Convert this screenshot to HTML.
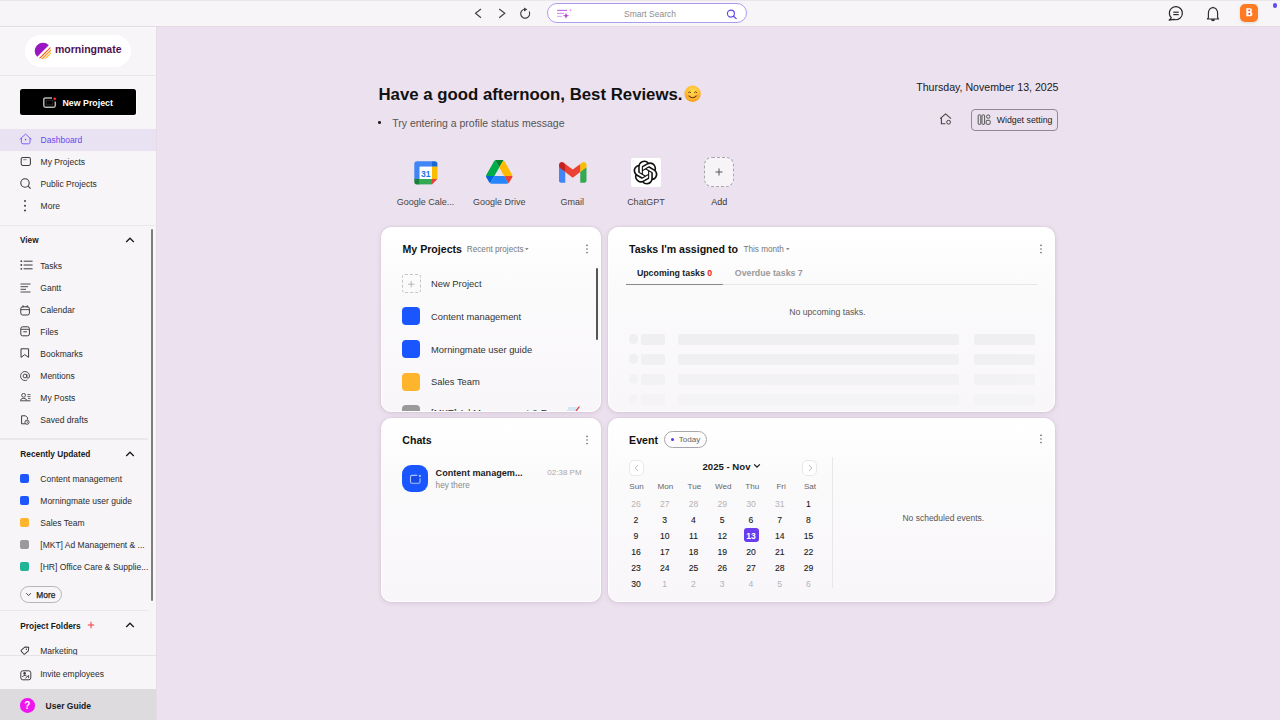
<!DOCTYPE html><html><head><meta charset="utf-8"><style>
html,body{margin:0;padding:0;width:1280px;height:720px;overflow:hidden;background:#ece1ee;font-family:"Liberation Sans",sans-serif;}
.a{position:absolute;}
.t{position:absolute;line-height:1;white-space:nowrap;}
</style></head><body>
<div class="a" style="left:0px;top:0px;width:1280px;height:720px;background:#ece1ee"></div>
<div class="a" style="left:0px;top:0px;width:1280px;height:27px;background:#f7f5f8;border-bottom:1px solid #e2dbe3;box-sizing:border-box;border-top:1px solid #ebe6ec"></div>
<svg class="a" style="left:470px;top:4px;" width="70" height="20" viewBox="0 0 70 20">
<polyline points="11,5 5.5,9.3 11,13.8" fill="none" stroke="#404040" stroke-width="1.15"/>
<polyline points="29.2,5 34.8,9.3 29.2,13.8" fill="none" stroke="#404040" stroke-width="1.15"/>
<path d="M59.2,7.6 A4.5,4.5 0 1 1 54.6,5.2" fill="none" stroke="#404040" stroke-width="1.15"/>
<path d="M54.0,3.6 L57.4,5.6 L54.0,7.6 Z" fill="#404040"/>
</svg>
<div class="a" style="left:546.5px;top:3.3px;width:200px;height:20.2px;box-sizing:border-box;border:1.2px solid #ac9cf0;border-radius:11px;background:#fff"></div>
<svg class="a" style="left:555px;top:8px;" width="20" height="11" viewBox="0 0 20 11">
<rect x="2" y="1.8" width="10" height="1.2" fill="#c86ee8"/>
<rect x="2" y="4.8" width="7" height="1.2" fill="#d89af0"/>
<rect x="2" y="7.8" width="5" height="1.2" fill="#e0b0f0"/>
<path d="M11,4.5 L11.8,6.9 L14.2,7.7 L11.8,8.5 L11,10.9 L10.2,8.5 L7.8,7.7 L10.2,6.9 Z" fill="#b040d8"/>
<path d="M15.5,0.5 L15.9,1.8 L17.2,2.2 L15.9,2.6 L15.5,3.9 L15.1,2.6 L13.8,2.2 L15.1,1.8 Z" fill="#d890f0"/>
</svg>
<div class="t" style="left:550px;width:200px;text-align:center;top:9.90px;font-size:8.5px;font-weight:400;color:#8e8e8e;">Smart Search</div>
<svg class="a" style="left:726px;top:8.5px;" width="12" height="11" viewBox="0 0 12 11"><circle cx="4.9" cy="4.6" r="3.5" fill="none" stroke="#5b45ef" stroke-width="1.1"/><line x1="7.5" y1="7.2" x2="10.2" y2="9.6" stroke="#5b45ef" stroke-width="1.2" stroke-linecap="round"/></svg>
<svg class="a" style="left:1166px;top:5px;" width="20" height="17" viewBox="0 0 20 17"><path d="M5.4,12.9 A6.5,6.5 0 1 1 8.0,14.4 L3.1,15.1 Z" fill="none" stroke="#2a2a2a" stroke-width="1.15" stroke-linejoin="round"/>
<line x1="7.3" y1="7.2" x2="12.7" y2="7.2" stroke="#2a2a2a" stroke-width="1.2"/><line x1="7.3" y1="9.6" x2="12.7" y2="9.6" stroke="#2a2a2a" stroke-width="1.2"/></svg>
<svg class="a" style="left:1204px;top:5px;" width="18" height="17" viewBox="0 0 18 17"><path d="M4.4,12.6 L4.4,8.0 A4.6,5.4 0 0 1 13.6,8.0 L13.6,12.6 L14.6,14.0 L3.4,14.0 Z" fill="none" stroke="#2a2a2a" stroke-width="1.15" stroke-linejoin="round"/>
<path d="M7.0,14.2 A2,2 0 0 0 11.0,14.2 Z" fill="#2a2a2a"/><path d="M8.2,2.6 L9,1.6 L9.8,2.6 Z" fill="#2a2a2a"/></svg>
<div class="a" style="left:1240px;top:4.2px;width:18.2px;height:18.2px;background:#ff7a22;border-radius:5px;box-shadow:0 1px 3px rgba(0,0,0,0.12)"></div>
<svg class="a" style="left:1245.8px;top:8.4px;" width="7" height="9" viewBox="0 0 7 9"><path d="M0.3,0.3 L3.9,0.3 Q6,0.3 6,2.2 Q6,3.4 5.1,3.95 Q6.5,4.5 6.5,6.2 Q6.5,8.3 4.1,8.3 L0.3,8.3 Z" fill="#fff"/><ellipse cx="3.3" cy="2.4" rx="0.95" ry="0.8" fill="#ff2a10"/><ellipse cx="3.4" cy="5.9" rx="1" ry="0.85" fill="#ff2a10"/></svg>
<div class="a" style="left:1272.5px;top:3px;width:4.6px;height:4.6px;background:#5d4cf0;border-radius:50%"></div>
<div class="a" style="left:0px;top:27px;width:156px;height:693px;background:#f7f5f8"></div>
<div class="a" style="left:156px;top:27px;width:1px;height:693px;background:#e6dce7"></div>
<div class="a" style="left:0px;top:27px;width:156px;height:1px;background:#fbfafc"></div>
<div class="a" style="left:25px;top:35px;width:106px;height:32px;background:#fff;border-radius:16px"></div>
<svg class="a" style="left:33px;top:42px;" width="22" height="18" viewBox="0 0 22 18"><defs><clipPath id="lc"><circle cx="10" cy="9" r="8.3"/></clipPath></defs>
<g clip-path="url(#lc)"><path d="M0,0 L19,0 L1,18 L0,18 Z" fill="#9a18c0"/>
<line x1="20" y1="3" x2="5" y2="18" stroke="#ff5a1e" stroke-width="1.2"/>
<line x1="21" y1="5" x2="7" y2="19" stroke="#ff8a1e" stroke-width="1.2"/>
<line x1="22" y1="7" x2="10" y2="19" stroke="#ffb81e" stroke-width="1.2"/></g></svg>
<div class="t " style="left:55px;top:44.11px;font-size:10.5px;font-weight:700;color:#4d1154;letter-spacing:0px">morningmate</div>
<div class="a" style="left:0px;top:74.5px;width:156px;height:1.5px;background:#ebe7ec"></div>
<div class="a" style="left:19.5px;top:88.5px;width:117px;height:27px;background:#fff;border-radius:3px"></div>
<div class="a" style="left:20px;top:89px;width:116px;height:26px;background:#000;border-radius:2.5px"></div>
<svg class="a" style="left:42px;top:96px;" width="16" height="13" viewBox="0 0 16 13"><path d="M10,1.9 L3.5,1.9 Q1.8,1.9 1.8,3.6 L1.8,9.6 Q1.8,11.3 3.5,11.3 L11.6,11.3 Q13.3,11.3 13.3,9.6 L13.3,5.4" fill="none" stroke="#b4b4b4" stroke-width="1.5"/>
<rect x="4.2" y="4.3" width="6.6" height="4.6" fill="none" stroke="#2e2e2e" stroke-width="0.8"/>
<circle cx="12.7" cy="2.8" r="1.35" fill="#ff2a2a"/></svg>
<div class="t " style="left:62.5px;top:98.85px;font-size:8.8px;font-weight:700;color:#fff;">New Project</div>
<div class="a" style="left:0px;top:129px;width:156px;height:22px;background:#e8e2f3"></div>
<svg class="a" style="left:19px;top:132px;" width="14" height="13" viewBox="0 0 14 13"><polyline points="1,7.2 6.6,2.1 12.2,7.2" fill="none" stroke="#7a5cf5" stroke-width="0.95" stroke-linejoin="round" stroke-linecap="round"/><path d="M2.4,5.9 L2.4,10.3 Q2.4,11.8 3.9,11.8 L9.5,11.8 Q11,11.8 11,10.3 L11,5.9" fill="none" stroke="#7a5cf5" stroke-width="0.95"/><circle cx="6.6" cy="7.6" r="0.8" fill="#6a48f0"/></svg>
<div class="t " style="left:40.6px;top:135.90px;font-size:8.5px;font-weight:400;color:#6a48f0;">Dashboard</div>
<svg class="a" style="left:19px;top:155px;" width="14" height="13" viewBox="0 0 14 13"><rect x="2.2" y="2.4" width="9.2" height="8" rx="1.6" fill="none" stroke="#3c3c3c" stroke-width="1.05"/><line x1="4.2" y1="4.7" x2="7.6" y2="4.7" stroke="#777" stroke-width="0.9"/></svg>
<div class="t " style="left:40.6px;top:157.80px;font-size:8.5px;font-weight:400;color:#2b2b2b;">My Projects</div>
<svg class="a" style="left:19px;top:177px;" width="14" height="13" viewBox="0 0 14 13"><circle cx="6" cy="6" r="4.2" fill="none" stroke="#3c3c3c" stroke-width="1.1"/><line x1="9.1" y1="9.1" x2="11.6" y2="11.6" stroke="#3c3c3c" stroke-width="1.1"/></svg>
<div class="t " style="left:40.6px;top:179.80px;font-size:8.5px;font-weight:400;color:#2b2b2b;">Public Projects</div>
<svg class="a" style="left:21px;top:199px;" width="8" height="14" viewBox="0 0 8 14"><circle cx="4" cy="2" r="1" fill="#3c3c3c"/><circle cx="4" cy="6.8" r="1" fill="#3c3c3c"/><circle cx="4" cy="11.6" r="1" fill="#3c3c3c"/></svg>
<div class="t " style="left:40.6px;top:201.80px;font-size:8.5px;font-weight:400;color:#2b2b2b;">More</div>
<div class="a" style="left:0px;top:224.8px;width:156px;height:1.3px;background:#ebe7ec"></div>
<div class="t " style="left:20px;top:236.81px;font-size:8.2px;font-weight:700;color:#1a1a1a;">View</div>
<svg class="a" style="left:124px;top:236px;" width="12" height="8" viewBox="0 0 12 8"><polyline points="2.2,6 6,2.2 9.8,6" fill="none" stroke="#1a1a1a" stroke-width="1.3"/></svg>
<div class="a" style="left:151px;top:229px;width:2.2px;height:371.5px;background:#7e7e7e;border-radius:1px"></div>
<svg class="a" style="left:20px;top:260px;" width="14" height="11" viewBox="0 0 14 11"><circle cx="1.3" cy="1.2" r="0.9" fill="#3c3c3c"/><circle cx="1.3" cy="5" r="0.9" fill="#3c3c3c"/><circle cx="1.3" cy="8.8" r="0.9" fill="#3c3c3c"/><line x1="3.6" y1="1.2" x2="12.6" y2="1.2" stroke="#3c3c3c" stroke-width="1"/><line x1="3.6" y1="5" x2="12.6" y2="5" stroke="#3c3c3c" stroke-width="1"/><line x1="3.6" y1="8.8" x2="12.6" y2="8.8" stroke="#3c3c3c" stroke-width="1"/></svg>
<div class="t " style="left:40.3px;top:262.20px;font-size:8.5px;font-weight:400;color:#2b2b2b;">Tasks</div>
<svg class="a" style="left:20px;top:283px;" width="14" height="11" viewBox="0 0 14 11"><line x1="0.5" y1="1" x2="10.5" y2="1" stroke="#3c3c3c" stroke-width="0.9"/><line x1="0.5" y1="3.7" x2="8" y2="3.7" stroke="#3c3c3c" stroke-width="0.9"/><line x1="0.5" y1="6.3" x2="6" y2="6.3" stroke="#3c3c3c" stroke-width="0.9"/><line x1="0.5" y1="9" x2="10.5" y2="9" stroke="#3c3c3c" stroke-width="0.9"/></svg>
<div class="t " style="left:40.3px;top:284.20px;font-size:8.5px;font-weight:400;color:#2b2b2b;">Gantt</div>
<svg class="a" style="left:20px;top:304.5px;" width="14" height="11" viewBox="0 0 14 11"><rect x="0.8" y="1.8" width="8.6" height="8.2" rx="1.8" fill="none" stroke="#3c3c3c" stroke-width="1"/><line x1="0.8" y1="4.6" x2="9.4" y2="4.6" stroke="#3c3c3c" stroke-width="0.9"/><line x1="3" y1="0.3" x2="3" y2="2.5" stroke="#3c3c3c" stroke-width="1"/><line x1="7.2" y1="0.3" x2="7.2" y2="2.5" stroke="#3c3c3c" stroke-width="1"/></svg>
<div class="t " style="left:40.3px;top:306.20px;font-size:8.5px;font-weight:400;color:#2b2b2b;">Calendar</div>
<svg class="a" style="left:20px;top:326px;" width="14" height="11" viewBox="0 0 14 11"><rect x="0.8" y="0.8" width="8.6" height="9" rx="1.8" fill="none" stroke="#3c3c3c" stroke-width="1"/><line x1="0.8" y1="3.3" x2="9.4" y2="3.3" stroke="#3c3c3c" stroke-width="0.9"/><line x1="3.3" y1="5.8" x2="6.9" y2="5.8" stroke="#3c3c3c" stroke-width="1"/></svg>
<div class="t " style="left:40.3px;top:328.20px;font-size:8.5px;font-weight:400;color:#2b2b2b;">Files</div>
<svg class="a" style="left:20px;top:348.2px;" width="14" height="11" viewBox="0 0 14 11"><path d="M1,0.8 L8.6,0.8 L8.6,9.4 L4.8,6.6 L1,9.4 Z" fill="none" stroke="#3c3c3c" stroke-width="1" stroke-linejoin="round"/></svg>
<div class="t " style="left:40.3px;top:350.20px;font-size:8.5px;font-weight:400;color:#2b2b2b;">Bookmarks</div>
<svg class="a" style="left:20px;top:370.7px;" width="14" height="11" viewBox="0 0 14 11"><circle cx="5" cy="5" r="1.9" fill="none" stroke="#3c3c3c" stroke-width="0.9"/><path d="M6.9,3.2 L6.9,5.9 Q6.9,7.2 8.1,7.2 Q9.5,7.2 9.5,5 A4.5,4.5 0 1 0 7.3,8.9" fill="none" stroke="#3c3c3c" stroke-width="0.9"/></svg>
<div class="t " style="left:40.3px;top:372.20px;font-size:8.5px;font-weight:400;color:#2b2b2b;">Mentions</div>
<svg class="a" style="left:20px;top:393.3px;" width="14" height="11" viewBox="0 0 14 11"><circle cx="3.6" cy="2.3" r="1.9" fill="none" stroke="#3c3c3c" stroke-width="0.9"/><path d="M0.3,7.6 Q0.8,5.3 3.6,5.3 Q6.4,5.3 6.9,7.6" fill="none" stroke="#3c3c3c" stroke-width="0.9"/><line x1="0.2" y1="7.8" x2="10.5" y2="7.8" stroke="#3c3c3c" stroke-width="0.9"/><line x1="7.4" y1="1.6" x2="10.5" y2="1.6" stroke="#3c3c3c" stroke-width="0.8"/><line x1="7.4" y1="3.6" x2="10.5" y2="3.6" stroke="#3c3c3c" stroke-width="0.8"/><line x1="8" y1="5.6" x2="10.5" y2="5.6" stroke="#3c3c3c" stroke-width="0.8"/></svg>
<div class="t " style="left:40.3px;top:394.20px;font-size:8.5px;font-weight:400;color:#2b2b2b;">My Posts</div>
<svg class="a" style="left:20px;top:414.7px;" width="14" height="11" viewBox="0 0 14 11"><path d="M5.5,8.8 L1.6,8.8 L1.6,0.8 L5.6,0.8 L7.6,2.8 L7.6,4.5" fill="none" stroke="#3c3c3c" stroke-width="1" stroke-linejoin="round"/><circle cx="7" cy="7.2" r="2.1" fill="none" stroke="#3c3c3c" stroke-width="0.9"/><polyline points="7,6.2 7,7.3 7.8,7.8" fill="none" stroke="#3c3c3c" stroke-width="0.7"/></svg>
<div class="t " style="left:40.3px;top:416.20px;font-size:8.5px;font-weight:400;color:#2b2b2b;">Saved drafts</div>
<div class="a" style="left:0px;top:438.3px;width:148px;height:1.5px;background:#ebe7ec"></div>
<div class="t " style="left:20.3px;top:449.97px;font-size:8.3px;font-weight:700;color:#1a1a1a;">Recently Updated</div>
<svg class="a" style="left:124px;top:450px;" width="12" height="8" viewBox="0 0 12 8"><polyline points="2.2,6 6,2.2 9.8,6" fill="none" stroke="#1a1a1a" stroke-width="1.3"/></svg>
<div class="a" style="left:20px;top:473.9px;width:9.2px;height:9.3px;background:#1f57ff;border-radius:2px"></div>
<div class="t " style="left:40.3px;top:475.30px;font-size:8.5px;font-weight:400;color:#2b2b2b;">Content management</div>
<div class="a" style="left:20px;top:495.9px;width:9.2px;height:9.3px;background:#1f57ff;border-radius:2px"></div>
<div class="t " style="left:40.3px;top:497.30px;font-size:8.5px;font-weight:400;color:#2b2b2b;">Morningmate user guide</div>
<div class="a" style="left:20px;top:517.9px;width:9.2px;height:9.3px;background:#ffb42e;border-radius:2px"></div>
<div class="t " style="left:40.3px;top:519.30px;font-size:8.5px;font-weight:400;color:#2b2b2b;">Sales Team</div>
<div class="a" style="left:20px;top:539.9px;width:9.2px;height:9.3px;background:#9a9a9a;border-radius:2px"></div>
<div class="t " style="left:40.3px;top:541.30px;font-size:8.5px;font-weight:400;color:#2b2b2b;">[MKT] Ad Management &amp; ...</div>
<div class="a" style="left:20px;top:561.9px;width:9.2px;height:9.3px;background:#1fb496;border-radius:2px"></div>
<div class="t " style="left:40.3px;top:563.30px;font-size:8.5px;font-weight:400;color:#2b2b2b;">[HR] Office Care &amp; Supplie...</div>
<div class="a" style="left:20px;top:586.2px;width:41.6px;height:17.1px;box-sizing:border-box;border:1px solid #b8b5ba;border-radius:9px"></div>
<svg class="a" style="left:25px;top:592px;" width="8" height="5" viewBox="0 0 8 5"><polyline points="1.3,1.2 3.6,3.5 5.9,1.2" fill="none" stroke="#333" stroke-width="0.9"/></svg>
<div class="t " style="left:36.3px;top:590.79px;font-size:8.4px;font-weight:400;color:#1e1e1e;-webkit-text-stroke:0.25px #1e1e1e">More</div>
<div class="a" style="left:0px;top:609.8px;width:148px;height:1.2px;background:#ebe7ec"></div>
<div class="t " style="left:20.3px;top:621.57px;font-size:8.3px;font-weight:700;color:#1a1a1a;">Project Folders</div>
<svg class="a" style="left:86px;top:620px;" width="10" height="10" viewBox="0 0 10 10"><line x1="5" y1="1.8" x2="5" y2="8.2" stroke="#f04a4a" stroke-width="1.1"/><line x1="1.8" y1="5" x2="8.2" y2="5" stroke="#f04a4a" stroke-width="1.1"/></svg>
<svg class="a" style="left:124px;top:621px;" width="12" height="8" viewBox="0 0 12 8"><polyline points="2.2,6 6,2.2 9.8,6" fill="none" stroke="#1a1a1a" stroke-width="1.3"/></svg>
<div class="a" style="left:0;top:640px;width:156px;height:15.5px;overflow:hidden">
<svg class="a" style="left:19.5px;top:5.3px;" width="12" height="11" viewBox="0 0 12 11"><g transform="translate(5.5,5.0) rotate(-40) translate(-4.4,-3)"><path d="M1.1,0.4 L6.0,0.4 L8.6,3 L6.0,5.6 L1.1,5.6 Q0.4,5.6 0.4,4.9 L0.4,1.1 Q0.4,0.4 1.1,0.4 Z" fill="none" stroke="#3c3c3c" stroke-width="0.95" stroke-linejoin="round"/><circle cx="5.6" cy="3" r="0.65" fill="#3c3c3c"/></g></svg>
<div class="t " style="left:40.2px;top:6.80px;font-size:8.5px;font-weight:400;color:#2b2b2b;">Marketing</div>
</div>
<div class="a" style="left:0px;top:655.3px;width:156px;height:1px;background:#e6e2e7"></div>
<svg class="a" style="left:19.5px;top:669.5px;" width="12" height="11" viewBox="0 0 12 11"><rect x="0.8" y="0.8" width="10" height="9" rx="2" fill="none" stroke="#3c3c3c" stroke-width="1"/><circle cx="4.6" cy="3.4" r="1.3" fill="#3c3c3c"/><path d="M2.2,7.2 Q3.2,5.2 5.4,5.4 L6.6,6" fill="none" stroke="#3c3c3c" stroke-width="1"/><path d="M5.2,8.4 L8.6,5.4 M8.6,5.4 L8.6,8.2" fill="none" stroke="#3c3c3c" stroke-width="0.9"/></svg>
<div class="t " style="left:40.2px;top:670.10px;font-size:8.5px;font-weight:400;color:#2b2b2b;">Invite employees</div>
<div class="a" style="left:0px;top:689.3px;width:156px;height:30.7px;background:#dedbdf"></div>
<div class="a" style="left:20.1px;top:698px;width:14.6px;height:14.6px;background:#f014f0;border-radius:50%"></div>
<div class="t" style="left:-72.6px;width:200px;text-align:center;top:700.74px;font-size:10px;font-weight:700;color:#fff;">?</div>
<div class="t " style="left:45.6px;top:701.60px;font-size:8.5px;font-weight:700;color:#1a1a1a;">User Guide</div>
<div class="t " style="left:378.5px;top:86.78px;font-size:16.8px;font-weight:700;color:#111;">Have a good afternoon, Best Reviews.<svg style="display:inline-block;vertical-align:top;margin-top:-2px;margin-left:1.3px" width="18" height="18" viewBox="0 0 18 18"><defs><radialGradient id="eg" cx="50%" cy="35%" r="65%"><stop offset="0" stop-color="#ffdc50"/><stop offset="0.65" stop-color="#ffbd30"/><stop offset="1" stop-color="#f59a1a"/></radialGradient></defs><circle cx="8.6" cy="8.8" r="8.2" fill="url(#eg)"/><path d="M4.2,7.8 Q5.6,5.8 7.0,7.8" fill="none" stroke="#6b3a12" stroke-width="1"/><path d="M10.2,7.8 Q11.6,5.8 13.0,7.8" fill="none" stroke="#6b3a12" stroke-width="1"/><path d="M4.6,10.6 Q8.6,14.8 12.6,10.6" fill="none" stroke="#6b3a12" stroke-width="1.1"/><ellipse cx="3.8" cy="10.6" rx="1.6" ry="1" fill="#ff7a5a" opacity="0.45"/><ellipse cx="13.4" cy="10.6" rx="1.6" ry="1" fill="#ff7a5a" opacity="0.45"/></svg></div>
<div class="a" style="left:378.2px;top:121.3px;width:2.6px;height:2.6px;background:#222;border-radius:50%"></div>
<div class="t " style="left:392.2px;top:117.61px;font-size:10.5px;font-weight:400;color:#555;">Try entering a profile status message</div>
<div class="t" style="right:221.5px;top:82.03px;font-size:10.6px;font-weight:400;color:#1a1a1a;text-align:right;">Thursday, November 13, 2025</div>
<svg class="a" style="left:938px;top:112px;" width="16" height="14" viewBox="0 0 16 14"><path d="M2.2,6.6 L7.6,1.8 L13,6.6" fill="none" stroke="#444" stroke-width="1.1" stroke-linejoin="round"/><path d="M3.4,5.6 L3.4,11.8 L7.4,11.8" fill="none" stroke="#444" stroke-width="1.1"/><circle cx="10.6" cy="10.2" r="1.9" fill="none" stroke="#444" stroke-width="1"/></svg>
<div class="a" style="left:971.2px;top:108.5px;width:86.8px;height:22.5px;box-sizing:border-box;border:1px solid #8f8a93;border-radius:4px"></div>
<svg class="a" style="left:977px;top:113px;" width="15" height="13" viewBox="0 0 15 13"><rect x="1.2" y="1.9" width="2.6" height="9.4" rx="0.6" fill="none" stroke="#555" stroke-width="1"/><rect x="5.0" y="1.9" width="2.6" height="9.4" rx="0.6" fill="none" stroke="#555" stroke-width="1"/><circle cx="11.2" cy="3.6" r="1.7" fill="none" stroke="#555" stroke-width="1"/><rect x="9.2" y="7.3" width="4" height="4" rx="0.8" fill="none" stroke="#555" stroke-width="1"/></svg>
<div class="t " style="left:996.7px;top:115.75px;font-size:8.8px;font-weight:400;color:#222;">Widget setting</div>
<svg class="a" style="left:414px;top:161px;" width="24" height="24" viewBox="0 0 24 24">
<path d="M0.3,3 Q0.3,0.3 3,0.3 L18,0.3 L18,5.7 L5.7,5.7 L5.7,18 L0.3,18 Z" fill="#4285f4"/>
<path d="M18,0.3 L20.7,0.3 Q23.4,0.3 23.4,3 L23.4,5.7 L18,5.7 Z" fill="#1967d2"/>
<rect x="18" y="5.7" width="5.4" height="12.3" fill="#fbbc04"/>
<path d="M5.7,18 L18,18 L18,23.4 L5.7,23.4 Z" fill="#34a853"/>
<path d="M0.3,18 L5.7,18 L5.7,23.4 L3,23.4 Q0.3,23.4 0.3,20.7 Z" fill="#188038"/>
<path d="M18,18 L23.4,18 L18,23.4 Z" fill="#ea4335"/>
<rect x="5.7" y="5.7" width="12.3" height="12.3" fill="#fff"/>
<text x="11.85" y="15.6" font-family="Liberation Sans" font-size="8.6" font-weight="700" fill="#1a73e8" text-anchor="middle">31</text>
</svg>
<div class="t" style="left:325.5px;width:200px;text-align:center;top:197.78px;font-size:9px;font-weight:400;color:#444;">Google Cale...</div>
<svg class="a" style="left:486px;top:160.4px;" width="27" height="24" viewBox="0 0 27 24"><g transform="scale(0.3036)">
<path d="m6.6 66.85 3.85 6.65c.8 1.4 1.95 2.5 3.3 3.3l13.75-23.8h-27.5c0 1.55.4 3.1 1.2 4.5z" fill="#0066da"/>
<path d="m43.65 25-13.75-23.8c-1.35.8-2.5 1.9-3.3 3.3l-25.4 44a9.06 9.06 0 0 0 -1.2 4.5h27.5z" fill="#00ac47"/>
<path d="m73.55 76.8c1.35-.8 2.5-1.9 3.3-3.3l1.6-2.75 7.65-13.25c.8-1.4 1.2-2.95 1.2-4.5h-27.502l5.852 11.5z" fill="#ea4335"/>
<path d="m43.65 25 13.75-23.8c-1.35-.8-2.9-1.2-4.5-1.2h-18.5c-1.6 0-3.15.45-4.5 1.2z" fill="#00832d"/>
<path d="m59.8 53h-32.3l-13.75 23.8c1.35.8 2.9 1.2 4.5 1.2h50.8c1.6 0 3.15-.45 4.5-1.2z" fill="#2684fc"/>
<path d="m73.4 26.5-12.7-22c-.8-1.4-1.950-2.5-3.3-3.3l-13.75 23.8 16.15 28h27.45c0-1.55-.4-3.1-1.2-4.5z" fill="#ffba00"/>
</g></svg>
<div class="t" style="left:399.3px;width:200px;text-align:center;top:197.78px;font-size:9px;font-weight:400;color:#444;">Google Drive</div>
<svg class="a" style="left:559px;top:162px;" width="28" height="21" viewBox="0 0 28 21"><g transform="scale(0.1075)">
<path fill="#4285F4" d="M58.182 192.05V93.14L27.507 65.077 0 49.504v125.091c0 9.658 7.825 17.455 17.455 17.455h40.727Z"/>
<path fill="#34A853" d="M197.818 192.05h40.727c9.659 0 17.455-7.826 17.455-17.455V49.505l-31.156 17.837-27.026 25.798v98.91Z"/>
<path fill="#EA4335" d="m58.182 93.14-4.174-38.647 4.174-36.989L128 69.868l69.818-52.364 4.669 34.992-4.669 40.644L128 145.504z"/>
<path fill="#FBBC04" d="M197.818 17.504V93.14L256 49.504V26.231c0-21.585-24.64-33.89-41.89-20.945l-16.292 12.218Z"/>
<path fill="#C5221F" d="M0 49.504l26.759 20.07L58.182 93.14V17.504L41.89 5.286C24.61-7.66 0 4.646 0 26.23v23.273Z"/>
</g></svg>
<div class="t" style="left:472.29999999999995px;width:200px;text-align:center;top:197.78px;font-size:9px;font-weight:400;color:#444;">Gmail</div>
<div class="a" style="left:631.2px;top:158px;width:29.4px;height:29.4px;background:#fff;border-radius:2px"></div>
<svg class="a" style="left:633.4px;top:160.2px;" width="25" height="25" viewBox="0 0 25 25"><g transform="translate(0.5,0.5)"><path fill="#111" d="M22.2819 9.8211a5.9847 5.9847 0 0 0-.5157-4.9108 6.0462 6.0462 0 0 0-6.5098-2.9A6.0651 6.0651 0 0 0 4.9807 4.1818a5.9847 5.9847 0 0 0-3.9977 2.9 6.0462 6.0462 0 0 0 .7427 7.0966 5.98 5.98 0 0 0 .511 4.9107 6.051 6.051 0 0 0 6.5146 2.9001A5.9847 5.9847 0 0 0 13.2599 24a6.0557 6.0557 0 0 0 5.7718-4.2058 5.9894 5.9894 0 0 0 3.9977-2.9001 6.0557 6.0557 0 0 0-.7475-7.0729zm-9.022 12.6081a4.4755 4.4755 0 0 1-2.8764-1.0408l.1419-.0804 4.7783-2.7582a.7948.7948 0 0 0 .3927-.6813v-6.7369l2.02 1.1686a.071.071 0 0 1 .038.052v5.5826a4.504 4.504 0 0 1-4.4945 4.4944zm-9.6607-4.1254a4.4708 4.4708 0 0 1-.5346-3.0137l.142.0852 4.783 2.7582a.7712.7712 0 0 0 .7806 0l5.8428-3.3685v2.3324a.0804.0804 0 0 1-.0332.0615L9.74 19.9502a4.4992 4.4992 0 0 1-6.1408-1.6464zM2.3408 7.8956a4.485 4.485 0 0 1 2.3655-1.9728V11.6a.7664.7664 0 0 0 .3879.6765l5.8144 3.3543-2.0201 1.1685a.0757.0757 0 0 1-.071 0l-4.8303-2.7865A4.504 4.504 0 0 1 2.3408 7.872zm16.5963 3.8558L13.1038 8.364 15.1192 7.2a.0757.0757 0 0 1 .071 0l4.8303 2.7913a4.4944 4.4944 0 0 1-.6765 8.1042v-5.6772a.79.79 0 0 0-.407-.667zm2.0107-3.0231l-.142-.0852-4.7735-2.7818a.7759.7759 0 0 0-.7854 0L9.409 9.2297V6.8974a.0662.0662 0 0 1 .0284-.0615l4.8303-2.7866a4.4992 4.4992 0 0 1 6.6802 4.66zM8.3065 12.863l-2.02-1.1638a.0804.0804 0 0 1-.038-.0567V6.0742a4.4992 4.4992 0 0 1 7.3757-3.4537l-.142.0805L8.704 5.459a.7948.7948 0 0 0-.3927.6813zm1.0976-2.3654l2.602-1.4998 2.6069 1.4998v2.9994l-2.5974 1.4997-2.6067-1.4997Z"/></g></svg>
<div class="t" style="left:545.9px;width:200px;text-align:center;top:197.78px;font-size:9px;font-weight:400;color:#444;">ChatGPT</div>
<div class="a" style="left:704.4px;top:157px;width:29.6px;height:29.6px;box-sizing:border-box;border:1px dashed #a8a4aa;border-radius:8px;background:#f7f4f8"></div>
<svg class="a" style="left:713px;top:166px;" width="12" height="12" viewBox="0 0 12 12"><line x1="6" y1="2.5" x2="6" y2="9.5" stroke="#555" stroke-width="1"/><line x1="2.5" y1="6" x2="9.5" y2="6" stroke="#555" stroke-width="1"/></svg>
<div class="t" style="left:619.2px;width:200px;text-align:center;top:197.78px;font-size:9px;font-weight:400;color:#333;">Add</div>
<div class="a" style="left:381px;top:227px;width:220px;height:184.5px;box-sizing:border-box;border:1px solid #fff;background:linear-gradient(180deg,#ffffff 0%,#fbfafb 35%,#f8f6f9 100%);border-radius:10px;box-shadow:0 0 1px rgba(110,80,120,0.35),0 1px 5px rgba(110,80,120,0.17)"></div>
<div class="a" style="left:608px;top:227px;width:446.5px;height:184.5px;box-sizing:border-box;border:1px solid #fff;background:linear-gradient(180deg,#ffffff 0%,#fbfafb 35%,#f8f6f9 100%);border-radius:10px;box-shadow:0 0 1px rgba(110,80,120,0.35),0 1px 5px rgba(110,80,120,0.17)"></div>
<div class="a" style="left:381px;top:418px;width:220px;height:184px;box-sizing:border-box;border:1px solid #fff;background:linear-gradient(180deg,#ffffff 0%,#fbfafb 35%,#f8f6f9 100%);border-radius:10px;box-shadow:0 0 1px rgba(110,80,120,0.35),0 1px 5px rgba(110,80,120,0.17)"></div>
<div class="a" style="left:608px;top:418px;width:446.5px;height:184px;box-sizing:border-box;border:1px solid #fff;background:linear-gradient(180deg,#ffffff 0%,#fbfafb 35%,#f8f6f9 100%);border-radius:10px;box-shadow:0 0 1px rgba(110,80,120,0.35),0 1px 5px rgba(110,80,120,0.17)"></div>
<div class="t " style="left:402.5px;top:244.03px;font-size:10.6px;font-weight:700;color:#111;">My Projects</div>
<div class="t " style="left:466.8px;top:246.06px;font-size:8.2px;font-weight:400;color:#777;">Recent projects</div>
<svg class="a" style="left:523.5px;top:246px;" width="6" height="6" viewBox="0 0 6 6"><path d="M1,2 L4.6,2 L2.8,4.2 Z" fill="#8a8a8a"/></svg>
<svg class="a" style="left:585.3px;top:243.6px;" width="4" height="11" viewBox="0 0 4 11"><circle cx="2" cy="1.4" r="0.8" fill="#666"/><circle cx="2" cy="5" r="0.8" fill="#666"/><circle cx="2" cy="8.6" r="0.8" fill="#666"/></svg>
<div class="a" style="left:401.7px;top:274.3px;width:19px;height:19px;box-sizing:border-box;border:1px dashed #c8c5ca;border-radius:3px"></div>
<svg class="a" style="left:406px;top:278.5px;" width="11" height="11" viewBox="0 0 11 11"><line x1="5.2" y1="2" x2="5.2" y2="8.4" stroke="#b0adb2" stroke-width="0.9"/><line x1="2" y1="5.2" x2="8.4" y2="5.2" stroke="#b0adb2" stroke-width="0.9"/></svg>
<div class="t " style="left:431px;top:279.14px;font-size:9.4px;font-weight:400;color:#333;">New Project</div>
<div class="a" style="left:401.7px;top:307.3px;width:18.6px;height:18px;background:#1a56ff;border-radius:4px"></div>
<div class="t " style="left:431px;top:312.04px;font-size:9.4px;font-weight:400;color:#333;">Content management</div>
<div class="a" style="left:401.7px;top:340.0px;width:18.6px;height:18px;background:#1a56ff;border-radius:4px"></div>
<div class="t " style="left:431px;top:344.74px;font-size:9.4px;font-weight:400;color:#333;">Morningmate user guide</div>
<div class="a" style="left:401.7px;top:372.70000000000005px;width:18.6px;height:18px;background:#ffb42e;border-radius:4px"></div>
<div class="t " style="left:431px;top:377.44px;font-size:9.4px;font-weight:400;color:#333;">Sales Team</div>
<div class="a" style="left:381px;top:400px;width:220px;height:10.8px;overflow:hidden;">
<div class="a" style="left:20.7px;top:5.0px;width:18.6px;height:18px;background:#9a9a9a;border-radius:4px"></div>
<div class="t " style="left:50px;top:8.07px;font-size:9.6px;font-weight:400;color:#333;">[MKT] Ad Management &amp; Report</div>
<div class="a" style="left:187px;top:7px;width:10px;height:8px;background:#d6e6f2;border-radius:1px"></div>
<svg class="a" style="left:194px;top:5.5px;" width="5" height="6" viewBox="0 0 5 6"><path d="M4.5,0.5 L1,5" stroke="#e02a2a" stroke-width="1.2"/></svg>
</div>
<div class="a" style="left:596px;top:268px;width:1.6px;height:72px;background:#555;border-radius:1px"></div>
<div class="t " style="left:629px;top:244.03px;font-size:10.6px;font-weight:700;color:#111;">Tasks I'm assigned to</div>
<div class="t " style="left:743.4px;top:246.06px;font-size:8.2px;font-weight:400;color:#777;">This month</div>
<svg class="a" style="left:785px;top:246px;" width="6" height="6" viewBox="0 0 6 6"><path d="M1,2 L4.6,2 L2.8,4.2 Z" fill="#8a8a8a"/></svg>
<svg class="a" style="left:1038.5px;top:243.6px;" width="4" height="11" viewBox="0 0 4 11"><circle cx="2" cy="1.4" r="0.8" fill="#666"/><circle cx="2" cy="5" r="0.8" fill="#666"/><circle cx="2" cy="8.6" r="0.8" fill="#666"/></svg>
<div class="t " style="left:636.9px;top:269.15px;font-size:8.8px;font-weight:700;color:#222;">Upcoming tasks <span style="color:#ff1a1a">0</span></div>
<div class="t " style="left:734.8px;top:269.15px;font-size:8.8px;font-weight:700;color:#999;">Overdue tasks 7</div>
<div class="a" style="left:625.5px;top:284px;width:412px;height:1px;background:#e8e6ea"></div>
<div class="a" style="left:625.5px;top:283.6px;width:97.5px;height:1.6px;background:#888"></div>
<div class="t" style="left:727.3px;width:200px;text-align:center;top:307.64px;font-size:8.7px;font-weight:400;color:#555;">No upcoming tasks.</div>
<div class="a" style="left:0;top:0;opacity:1">
<div class="a" style="left:628.6px;top:334.3px;width:9.6px;height:9.6px;background:#efeef0;border-radius:50%"></div>
<div class="a" style="left:641.3px;top:333.8px;width:24.1px;height:11px;background:#efeef0;border-radius:2px"></div>
<div class="a" style="left:678.4px;top:333.8px;width:280.2px;height:11px;background:#efeef0;border-radius:2px"></div>
<div class="a" style="left:974px;top:333.8px;width:61.3px;height:11px;background:#efeef0;border-radius:2px"></div>
</div>
<div class="a" style="left:0;top:0;opacity:0.85">
<div class="a" style="left:628.6px;top:354.3px;width:9.6px;height:9.6px;background:#efeef0;border-radius:50%"></div>
<div class="a" style="left:641.3px;top:353.8px;width:24.1px;height:11px;background:#efeef0;border-radius:2px"></div>
<div class="a" style="left:678.4px;top:353.8px;width:280.2px;height:11px;background:#efeef0;border-radius:2px"></div>
<div class="a" style="left:974px;top:353.8px;width:61.3px;height:11px;background:#efeef0;border-radius:2px"></div>
</div>
<div class="a" style="left:0;top:0;opacity:0.6">
<div class="a" style="left:628.6px;top:374.3px;width:9.6px;height:9.6px;background:#efeef0;border-radius:50%"></div>
<div class="a" style="left:641.3px;top:373.8px;width:24.1px;height:11px;background:#efeef0;border-radius:2px"></div>
<div class="a" style="left:678.4px;top:373.8px;width:280.2px;height:11px;background:#efeef0;border-radius:2px"></div>
<div class="a" style="left:974px;top:373.8px;width:61.3px;height:11px;background:#efeef0;border-radius:2px"></div>
</div>
<div class="a" style="left:0;top:0;opacity:0.35">
<div class="a" style="left:628.6px;top:394.3px;width:9.6px;height:9.6px;background:#efeef0;border-radius:50%"></div>
<div class="a" style="left:641.3px;top:393.8px;width:24.1px;height:11px;background:#efeef0;border-radius:2px"></div>
<div class="a" style="left:678.4px;top:393.8px;width:280.2px;height:11px;background:#efeef0;border-radius:2px"></div>
<div class="a" style="left:974px;top:393.8px;width:61.3px;height:11px;background:#efeef0;border-radius:2px"></div>
</div>
<div class="t " style="left:402.3px;top:434.93px;font-size:10.6px;font-weight:700;color:#111;">Chats</div>
<svg class="a" style="left:585.4px;top:434.6px;" width="4" height="11" viewBox="0 0 4 11"><circle cx="2" cy="1.4" r="0.8" fill="#666"/><circle cx="2" cy="5" r="0.8" fill="#666"/><circle cx="2" cy="8.6" r="0.8" fill="#666"/></svg>
<div class="a" style="left:402.3px;top:465.4px;width:25.8px;height:26.4px;background:#1a56ff;border-radius:9px"></div>
<svg class="a" style="left:408px;top:472px;" width="15" height="13" viewBox="0 0 15 13"><path d="M9.2,3.4 L3.9,3.4 Q2.5,3.4 2.5,4.8 L2.5,9.8 Q2.5,11.2 3.9,11.2 L10.6,11.2 Q12,11.2 12,9.8 L12,6.2" fill="rgba(0,20,120,0.18)" stroke="#a9c4ff" stroke-width="1.1"/><circle cx="11.9" cy="3.9" r="0.95" fill="#dce8ff"/></svg>
<div class="t " style="left:435.6px;top:468.50px;font-size:9.1px;font-weight:700;color:#222;">Content managem...</div>
<div class="t" style="right:698.4px;top:469.43px;font-size:8.0px;font-weight:400;color:#a8a8a8;text-align:right;">02:38 PM</div>
<div class="t " style="left:435.6px;top:482.46px;font-size:8.2px;font-weight:400;color:#8a8a8a;">hey there</div>
<div class="t " style="left:629.1px;top:435.43px;font-size:10.6px;font-weight:700;color:#111;">Event</div>
<div class="a" style="left:663.6px;top:431.1px;width:43.3px;height:17px;box-sizing:border-box;border:1px solid #a9a6ab;border-radius:9px"></div>
<div class="a" style="left:670.6px;top:438px;width:3.2px;height:3.2px;background:#5b2ff0;border-radius:50%"></div>
<div class="t " style="left:678.7px;top:435.94px;font-size:8.1px;font-weight:400;color:#666;">Today</div>
<svg class="a" style="left:1038.5px;top:434px;" width="4" height="11" viewBox="0 0 4 11"><circle cx="2" cy="1.4" r="0.8" fill="#666"/><circle cx="2" cy="5" r="0.8" fill="#666"/><circle cx="2" cy="8.6" r="0.8" fill="#666"/></svg>
<div class="a" style="left:629.1px;top:460.2px;width:15.1px;height:15.4px;box-sizing:border-box;border:1px solid #ebe8ec;border-radius:5px;background:#fff"></div>
<svg class="a" style="left:633px;top:464px;" width="8" height="8" viewBox="0 0 8 8"><polyline points="5,1 2.2,4 5,7" fill="none" stroke="#b8b5ba" stroke-width="0.9"/></svg>
<div class="a" style="left:802.2px;top:460.2px;width:15.1px;height:15.4px;box-sizing:border-box;border:1px solid #ebe8ec;border-radius:5px;background:#fff"></div>
<svg class="a" style="left:806px;top:464px;" width="8" height="8" viewBox="0 0 8 8"><polyline points="3,1 5.8,4 3,7" fill="none" stroke="#b8b5ba" stroke-width="0.9"/></svg>
<div class="t " style="left:702.5px;top:461.87px;font-size:9.6px;font-weight:700;color:#1a1a1a;">2025 - Nov</div>
<svg class="a" style="left:752px;top:462px;" width="10" height="8" viewBox="0 0 10 8"><polyline points="2.2,2.4 5,5.2 7.8,2.4" fill="none" stroke="#1a1a1a" stroke-width="1.3"/></svg>
<div class="t" style="left:536.5px;width:200px;text-align:center;top:482.74px;font-size:8.1px;font-weight:400;color:#666;">Sun</div>
<div class="t" style="left:565.42px;width:200px;text-align:center;top:482.74px;font-size:8.1px;font-weight:400;color:#666;">Mon</div>
<div class="t" style="left:594.34px;width:200px;text-align:center;top:482.74px;font-size:8.1px;font-weight:400;color:#666;">Tue</div>
<div class="t" style="left:623.26px;width:200px;text-align:center;top:482.74px;font-size:8.1px;font-weight:400;color:#666;">Wed</div>
<div class="t" style="left:652.1800000000001px;width:200px;text-align:center;top:482.74px;font-size:8.1px;font-weight:400;color:#666;">Thu</div>
<div class="t" style="left:681.1px;width:200px;text-align:center;top:482.74px;font-size:8.1px;font-weight:400;color:#666;">Fri</div>
<div class="t" style="left:710.02px;width:200px;text-align:center;top:482.74px;font-size:8.1px;font-weight:400;color:#666;">Sat</div>
<div class="t" style="left:536.0px;width:200px;text-align:center;top:500.02px;font-size:8.6px;font-weight:400;color:#b5b3b7;">26</div>
<div class="t" style="left:564.75px;width:200px;text-align:center;top:500.02px;font-size:8.6px;font-weight:400;color:#b5b3b7;">27</div>
<div class="t" style="left:593.5px;width:200px;text-align:center;top:500.02px;font-size:8.6px;font-weight:400;color:#b5b3b7;">28</div>
<div class="t" style="left:622.25px;width:200px;text-align:center;top:500.02px;font-size:8.6px;font-weight:400;color:#b5b3b7;">29</div>
<div class="t" style="left:651.0px;width:200px;text-align:center;top:500.02px;font-size:8.6px;font-weight:400;color:#b5b3b7;">30</div>
<div class="t" style="left:679.75px;width:200px;text-align:center;top:500.02px;font-size:8.6px;font-weight:400;color:#b5b3b7;">31</div>
<div class="t" style="left:708.5px;width:200px;text-align:center;top:500.02px;font-size:8.6px;font-weight:400;color:#151515;-webkit-text-stroke:0.1px #2a2a2a">1</div>
<div class="t" style="left:536.0px;width:200px;text-align:center;top:516.06px;font-size:8.6px;font-weight:400;color:#151515;-webkit-text-stroke:0.1px #2a2a2a">2</div>
<div class="t" style="left:564.75px;width:200px;text-align:center;top:516.06px;font-size:8.6px;font-weight:400;color:#151515;-webkit-text-stroke:0.1px #2a2a2a">3</div>
<div class="t" style="left:593.5px;width:200px;text-align:center;top:516.06px;font-size:8.6px;font-weight:400;color:#151515;-webkit-text-stroke:0.1px #2a2a2a">4</div>
<div class="t" style="left:622.25px;width:200px;text-align:center;top:516.06px;font-size:8.6px;font-weight:400;color:#151515;-webkit-text-stroke:0.1px #2a2a2a">5</div>
<div class="t" style="left:651.0px;width:200px;text-align:center;top:516.06px;font-size:8.6px;font-weight:400;color:#151515;-webkit-text-stroke:0.1px #2a2a2a">6</div>
<div class="t" style="left:679.75px;width:200px;text-align:center;top:516.06px;font-size:8.6px;font-weight:400;color:#151515;-webkit-text-stroke:0.1px #2a2a2a">7</div>
<div class="t" style="left:708.5px;width:200px;text-align:center;top:516.06px;font-size:8.6px;font-weight:400;color:#151515;-webkit-text-stroke:0.1px #2a2a2a">8</div>
<div class="t" style="left:536.0px;width:200px;text-align:center;top:532.10px;font-size:8.6px;font-weight:400;color:#151515;-webkit-text-stroke:0.1px #2a2a2a">9</div>
<div class="t" style="left:564.75px;width:200px;text-align:center;top:532.10px;font-size:8.6px;font-weight:400;color:#151515;-webkit-text-stroke:0.1px #2a2a2a">10</div>
<div class="t" style="left:593.5px;width:200px;text-align:center;top:532.10px;font-size:8.6px;font-weight:400;color:#151515;-webkit-text-stroke:0.1px #2a2a2a">11</div>
<div class="t" style="left:622.25px;width:200px;text-align:center;top:532.10px;font-size:8.6px;font-weight:400;color:#151515;-webkit-text-stroke:0.1px #2a2a2a">12</div>
<div class="a" style="left:744px;top:528.3px;width:14.5px;height:14.2px;background:#6a3cf0;border-radius:3px"></div>
<div class="t" style="left:651.0px;width:200px;text-align:center;top:532.10px;font-size:8.6px;font-weight:700;color:#fff;">13</div>
<div class="t" style="left:679.75px;width:200px;text-align:center;top:532.10px;font-size:8.6px;font-weight:400;color:#151515;-webkit-text-stroke:0.1px #2a2a2a">14</div>
<div class="t" style="left:708.5px;width:200px;text-align:center;top:532.10px;font-size:8.6px;font-weight:400;color:#151515;-webkit-text-stroke:0.1px #2a2a2a">15</div>
<div class="t" style="left:536.0px;width:200px;text-align:center;top:548.14px;font-size:8.6px;font-weight:400;color:#151515;-webkit-text-stroke:0.1px #2a2a2a">16</div>
<div class="t" style="left:564.75px;width:200px;text-align:center;top:548.14px;font-size:8.6px;font-weight:400;color:#151515;-webkit-text-stroke:0.1px #2a2a2a">17</div>
<div class="t" style="left:593.5px;width:200px;text-align:center;top:548.14px;font-size:8.6px;font-weight:400;color:#151515;-webkit-text-stroke:0.1px #2a2a2a">18</div>
<div class="t" style="left:622.25px;width:200px;text-align:center;top:548.14px;font-size:8.6px;font-weight:400;color:#151515;-webkit-text-stroke:0.1px #2a2a2a">19</div>
<div class="t" style="left:651.0px;width:200px;text-align:center;top:548.14px;font-size:8.6px;font-weight:400;color:#151515;-webkit-text-stroke:0.1px #2a2a2a">20</div>
<div class="t" style="left:679.75px;width:200px;text-align:center;top:548.14px;font-size:8.6px;font-weight:400;color:#151515;-webkit-text-stroke:0.1px #2a2a2a">21</div>
<div class="t" style="left:708.5px;width:200px;text-align:center;top:548.14px;font-size:8.6px;font-weight:400;color:#151515;-webkit-text-stroke:0.1px #2a2a2a">22</div>
<div class="t" style="left:536.0px;width:200px;text-align:center;top:564.18px;font-size:8.6px;font-weight:400;color:#151515;-webkit-text-stroke:0.1px #2a2a2a">23</div>
<div class="t" style="left:564.75px;width:200px;text-align:center;top:564.18px;font-size:8.6px;font-weight:400;color:#151515;-webkit-text-stroke:0.1px #2a2a2a">24</div>
<div class="t" style="left:593.5px;width:200px;text-align:center;top:564.18px;font-size:8.6px;font-weight:400;color:#151515;-webkit-text-stroke:0.1px #2a2a2a">25</div>
<div class="t" style="left:622.25px;width:200px;text-align:center;top:564.18px;font-size:8.6px;font-weight:400;color:#151515;-webkit-text-stroke:0.1px #2a2a2a">26</div>
<div class="t" style="left:651.0px;width:200px;text-align:center;top:564.18px;font-size:8.6px;font-weight:400;color:#151515;-webkit-text-stroke:0.1px #2a2a2a">27</div>
<div class="t" style="left:679.75px;width:200px;text-align:center;top:564.18px;font-size:8.6px;font-weight:400;color:#151515;-webkit-text-stroke:0.1px #2a2a2a">28</div>
<div class="t" style="left:708.5px;width:200px;text-align:center;top:564.18px;font-size:8.6px;font-weight:400;color:#151515;-webkit-text-stroke:0.1px #2a2a2a">29</div>
<div class="t" style="left:536.0px;width:200px;text-align:center;top:580.22px;font-size:8.6px;font-weight:400;color:#151515;-webkit-text-stroke:0.1px #2a2a2a">30</div>
<div class="t" style="left:564.75px;width:200px;text-align:center;top:580.22px;font-size:8.6px;font-weight:400;color:#b5b3b7;">1</div>
<div class="t" style="left:593.5px;width:200px;text-align:center;top:580.22px;font-size:8.6px;font-weight:400;color:#b5b3b7;">2</div>
<div class="t" style="left:622.25px;width:200px;text-align:center;top:580.22px;font-size:8.6px;font-weight:400;color:#b5b3b7;">3</div>
<div class="t" style="left:651.0px;width:200px;text-align:center;top:580.22px;font-size:8.6px;font-weight:400;color:#b5b3b7;">4</div>
<div class="t" style="left:679.75px;width:200px;text-align:center;top:580.22px;font-size:8.6px;font-weight:400;color:#b5b3b7;">5</div>
<div class="t" style="left:708.5px;width:200px;text-align:center;top:580.22px;font-size:8.6px;font-weight:400;color:#b5b3b7;">6</div>
<div class="a" style="left:832.3px;top:456.6px;width:1px;height:131.7px;background:#e9e7ea"></div>
<div class="t" style="left:843.3px;width:200px;text-align:center;top:513.80px;font-size:8.5px;font-weight:400;color:#555;">No scheduled events.</div>
</body></html>
